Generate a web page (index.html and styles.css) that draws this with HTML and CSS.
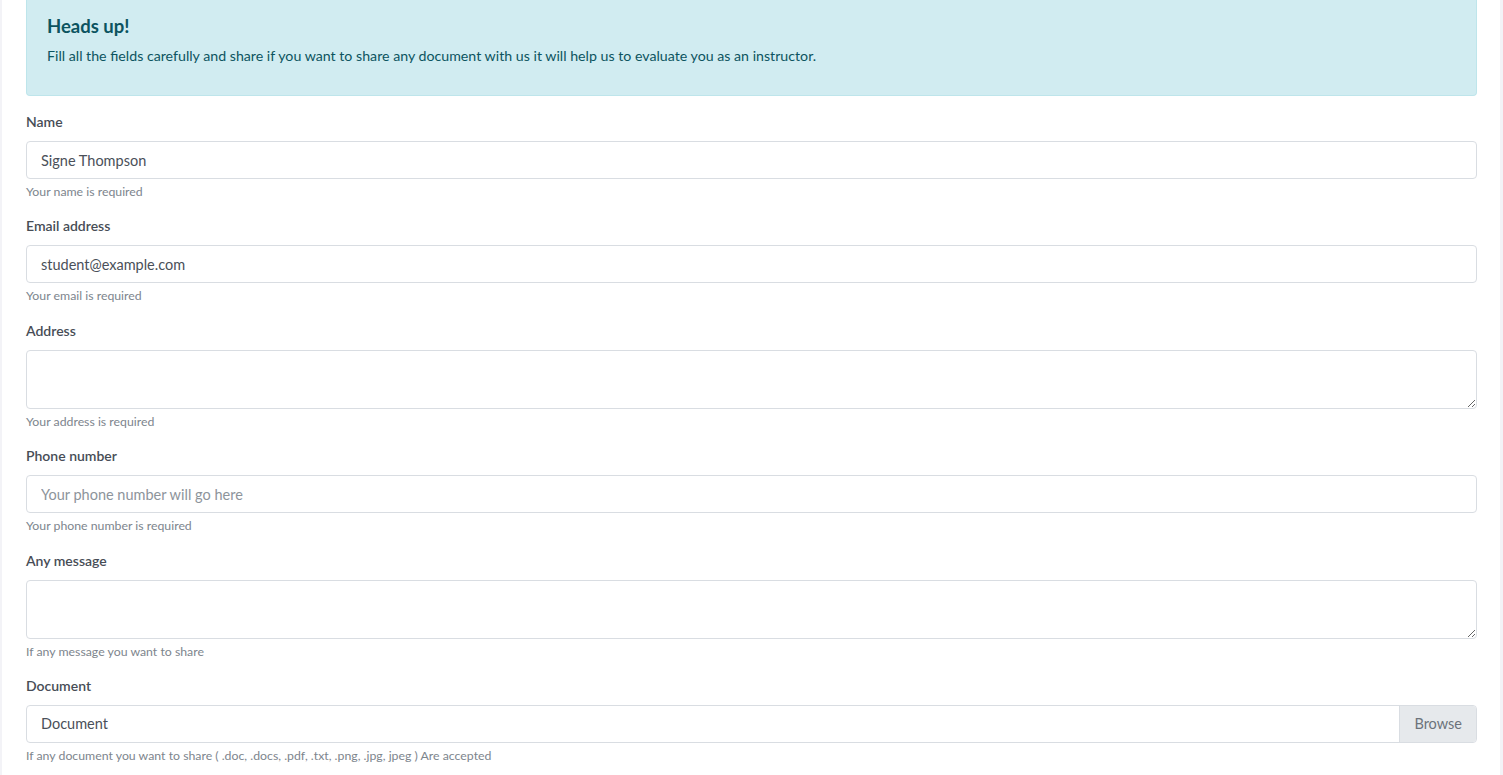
FILE: index.html
```html
<!DOCTYPE html>
<html>
<head>
<meta charset="utf-8">
<link rel="stylesheet" href="styles.css">
</head>
<body>
<div class="page">
  <div class="card">
    <div class="alert">
      <h4 class="alert-title">Heads up!</h4>
      <p class="alert-text">Fill all the fields carefully and share if you want to share any document with us it will help us to evaluate you as an instructor.</p>
    </div>
    <form class="form">
      <div class="group">
        <label class="label">Name</label>
        <input class="control" type="text" value="Signe Thompson">
        <small class="help">Your name is required</small>
      </div>
      <div class="group">
        <label class="label">Email address</label>
        <input class="control" type="text" value="student@example.com">
        <small class="help">Your email is required</small>
      </div>
      <div class="group">
        <label class="label">Address</label>
        <textarea class="control area"></textarea>
        <small class="help">Your address is required</small>
      </div>
      <div class="group">
        <label class="label">Phone number</label>
        <input class="control" type="text" placeholder="Your phone number will go here">
        <small class="help">Your phone number is required</small>
      </div>
      <div class="group">
        <label class="label">Any message</label>
        <textarea class="control area"></textarea>
        <small class="help">If any message you want to share</small>
      </div>
      <div class="group">
        <label class="label">Document</label>
        <div class="file">
          <span class="file-name">Document</span>
          <span class="file-btn">Browse</span>
        </div>
        <small class="help">If any document you want to share ( .doc, .docs, .pdf, .txt, .png, .jpg, jpeg ) Are accepted</small>
      </div>
    </form>
  </div>
</div>
</body>
</html>
```

FILE: styles.css
```css
html, body {
  margin: 0;
  padding: 0;
  background: #f3f3f7;
  font-family: "Lato", "Noto Sans", sans-serif;
  color: #4a5059;
}
.page {
  padding: 0 3px 0 2px;
}
.card {
  background: #ffffff;
  padding: 0 23px 40px 24px;
  min-height: 775px;
  box-sizing: border-box;
}
.alert {
  background: #d1ecf1;
  border: 1px solid #bee5eb;
  border-top: none;
  border-radius: 0 0 4px 4px;
  color: #0c5460;
  padding: 15px 20px 30px 20px;
}
.alert-title {
  margin: 0 0 10px 0;
  font-size: 18.5px;
  font-weight: 700;
  line-height: 22px;
}
.alert-text {
  margin: 0;
  font-size: 14.2px;
  line-height: 18px;
}
.form {
  padding-top: 17px;
}
.group {
  display: flex;
  flex-direction: column;
  margin-bottom: 18.4px;
}
.label {
  font-size: 14px;
  font-weight: 600;
  line-height: 18px;
  color: #474d56;
  margin-bottom: 10px;
}
.control {
  display: block;
  box-sizing: border-box;
  width: 100%;
  height: 38px;
  padding: 6px 14px;
  font-family: inherit;
  font-size: 14.5px;
  color: #4a5059;
  background: #fff;
  border: 1px solid #d9dde2;
  border-radius: 4px;
  outline: none;
}
.control::placeholder {
  color: #8d949b;
}
.area {
  height: 59px;
  resize: vertical;
}
.help {
  margin-top: 6px;
  font-size: 12.3px;
  line-height: 14px;
  color: #7d858d;
}
.file {
  display: flex;
  height: 38px;
  box-sizing: border-box;
  border: 1px solid #d9dde2;
  border-radius: 4px;
  overflow: hidden;
  font-size: 14.5px;
}
.file-name {
  flex: 1;
  display: flex;
  align-items: center;
  padding-left: 14px;
  color: #4a5059;
}
.file-btn {
  display: flex;
  align-items: center;
  padding: 0 14px;
  background: #e6e9ec;
  border-left: 1px solid #d9dde2;
  color: #6c737b;
}
```
